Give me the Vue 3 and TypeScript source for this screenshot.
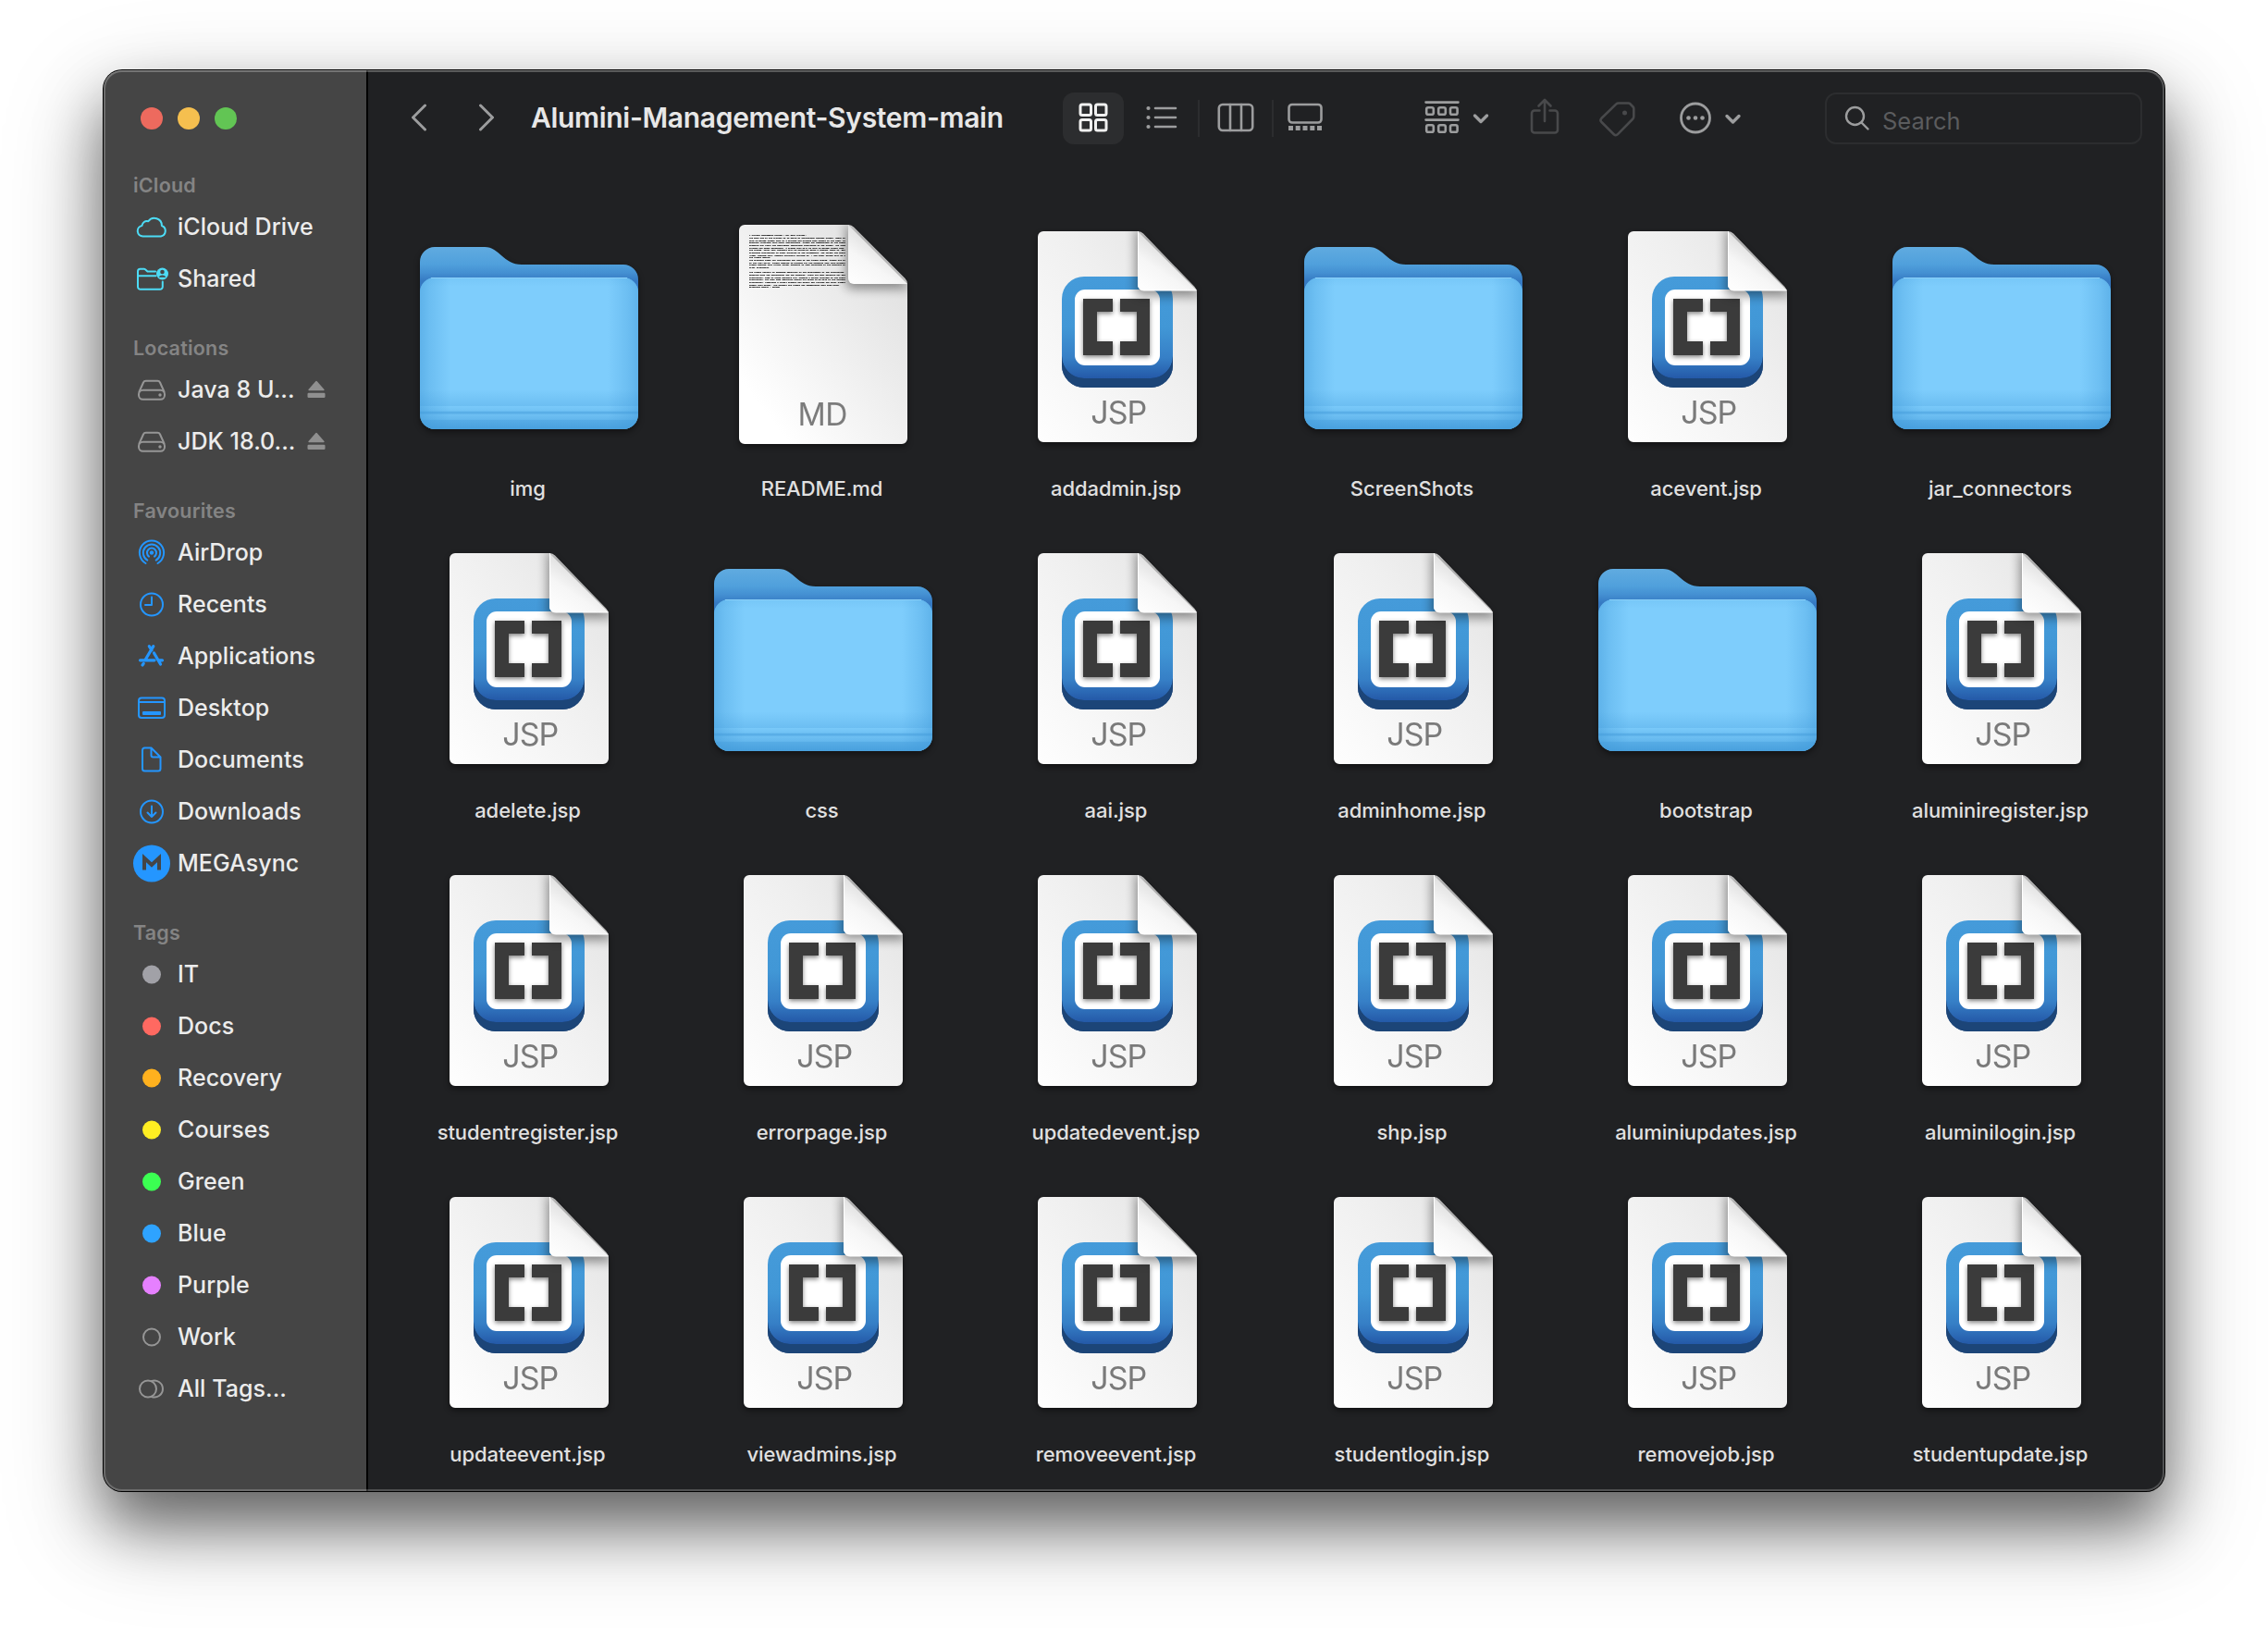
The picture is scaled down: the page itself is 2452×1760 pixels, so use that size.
<script setup lang="ts">
type IconName =
  | 'cloud' | 'shared' | 'disk' | 'airdrop' | 'clock' | 'apps' | 'desktop'
  | 'document' | 'download' | 'mega' | 'dot' | 'ring' | 'rings'

interface SidebarItem {
  label: string
  icon: IconName
  color: string
  eject?: boolean
}

interface SidebarSection {
  title: string
  items: SidebarItem[]
}

type FileKind = 'folder' | 'md' | 'jsp'

interface FileEntry {
  name: string
  kind: FileKind
}

const CYAN = '#4ddcf6'
const BLUE = '#2496ff'
const GREY = '#969696'

const sections: SidebarSection[] = [
  {
    title: 'iCloud',
    items: [
      { label: 'iCloud Drive', icon: 'cloud', color: CYAN },
      { label: 'Shared', icon: 'shared', color: CYAN },
    ],
  },
  {
    title: 'Locations',
    items: [
      { label: 'Java 8 U...', icon: 'disk', color: GREY, eject: true },
      { label: 'JDK 18.0...', icon: 'disk', color: GREY, eject: true },
    ],
  },
  {
    title: 'Favourites',
    items: [
      { label: 'AirDrop', icon: 'airdrop', color: BLUE },
      { label: 'Recents', icon: 'clock', color: BLUE },
      { label: 'Applications', icon: 'apps', color: BLUE },
      { label: 'Desktop', icon: 'desktop', color: BLUE },
      { label: 'Documents', icon: 'document', color: BLUE },
      { label: 'Downloads', icon: 'download', color: BLUE },
      { label: 'MEGAsync', icon: 'mega', color: BLUE },
    ],
  },
  {
    title: 'Tags',
    items: [
      { label: 'IT', icon: 'dot', color: '#a1a1a7' },
      { label: 'Docs', icon: 'dot', color: '#ff6961' },
      { label: 'Recovery', icon: 'dot', color: '#ffb11e' },
      { label: 'Courses', icon: 'dot', color: '#ffee22' },
      { label: 'Green', icon: 'dot', color: '#3bff52' },
      { label: 'Blue', icon: 'dot', color: '#2ea3ff' },
      { label: 'Purple', icon: 'dot', color: '#e680ff' },
      { label: 'Work', icon: 'ring', color: GREY },
      { label: 'All Tags...', icon: 'rings', color: GREY },
    ],
  },
]

const names: string[] = [
  'img', 'README.md', 'addadmin.jsp', 'ScreenShots', 'acevent.jsp', 'jar_connectors',
  'adelete.jsp', 'css', 'aai.jsp', 'adminhome.jsp', 'bootstrap', 'aluminiregister.jsp',
  'studentregister.jsp', 'errorpage.jsp', 'updatedevent.jsp', 'shp.jsp', 'aluminiupdates.jsp', 'aluminilogin.jsp',
  'updateevent.jsp', 'viewadmins.jsp', 'removeevent.jsp', 'studentlogin.jsp', 'removejob.jsp', 'studentupdate.jsp',
]

const kindOf = (name: string): FileKind =>
  name.endsWith('.jsp') ? 'jsp' : name.endsWith('.md') ? 'md' : 'folder'

const files: FileEntry[] = names.map((name) => ({ name, kind: kindOf(name) }))

const readme: string[] = [
  '# Project Management System - HCL Mini Project:',
  'The main aim of the project is to build an interaction between alumni, admin an',
  'able to manage alumni data of a college and provide easy access to the same, fo',
  'maintain relations with their institutions. Alumni can communicate to the stude',
  'students can learn the department technology activities to the alumni. The alum',
  'through the admin permission. A system that will be able to manage alumni data ',
  'the system. Final year students will be initially given a student login ID. Bef',
  'providing invitations to their profiles to the placements. The format has inclu',
  '(name, passing year, company currently working in, ) and their status will be i',
  'the alumni module.',
  'The greatest asset any institution can have is the Alumni system. Alumni are th',
  'in the real world. Alumni website is created for the students that have graduat',
  'alumni website that allows former students to take advantage of the benefits an',
  'after graduation.',
  '',
  'The alumni network is becoming important in the development of the institution ',
  'benefits both the institution and the students. There are many benefits for bei',
  'institution. Some of those benefits are: keeping a person informed on the event',
  'institution, and when some important events are going to be held in the institu',
  'information, receiving a formal student can easily get related and other alumni',
  'submit data easier. The student and alumni can communicate with each other.',
  'Milestone Manual - README',
]
</script>

<template>
  <div class="page">
    <svg class="defs" width="0" height="0" aria-hidden="true">
      <defs>
        <linearGradient id="sheet" x1="1" y1="0" x2="0" y2="1">
          <stop offset="0" stop-color="#e2e2e2" />
          <stop offset=".4" stop-color="#efefef" />
          <stop offset="1" stop-color="#fefefe" />
        </linearGradient>
        <linearGradient id="sheetMd" x1="1" y1="0" x2="0" y2="1">
          <stop offset="0" stop-color="#dcdcdc" />
          <stop offset=".4" stop-color="#ececec" />
          <stop offset=".85" stop-color="#ffffff" />
        </linearGradient>
        <linearGradient id="fold" x1="0.2" y1="1" x2=".62" y2=".38">
          <stop offset="0" stop-color="#fdfdfd" />
          <stop offset=".5" stop-color="#f6f6f6" />
          <stop offset="1" stop-color="#dfdfdf" />
        </linearGradient>
        <linearGradient id="blueFace" x1="0" y1="0" x2="0" y2="1">
          <stop offset="0" stop-color="#459bda" />
          <stop offset=".5" stop-color="#4197d6" />
          <stop offset=".8" stop-color="#367fc6" />
          <stop offset="1" stop-color="#2459a8" />
        </linearGradient>
        <linearGradient id="folderBack" gradientUnits="userSpaceOnUse" x1="0" y1="31" x2="0" y2="68">
          <stop offset="0" stop-color="#60abe0" />
          <stop offset=".5" stop-color="#50a0dc" />
          <stop offset=".75" stop-color="#4490d2" />
          <stop offset="1" stop-color="#3579c2" />
        </linearGradient>
        <linearGradient id="folderSides" x1="0" y1="0" x2="1" y2="0">
          <stop offset="0" stop-color="#3f98d8" stop-opacity=".5" />
          <stop offset=".05" stop-color="#3f98d8" stop-opacity=".27" />
          <stop offset=".14" stop-color="#3f98d8" stop-opacity="0" />
          <stop offset=".86" stop-color="#3f98d8" stop-opacity="0" />
          <stop offset=".95" stop-color="#3f98d8" stop-opacity=".27" />
          <stop offset="1" stop-color="#3f98d8" stop-opacity=".5" />
        </linearGradient>
        <linearGradient id="folderBottom" x1="0" y1="0" x2="0" y2="1">
          <stop offset="0" stop-color="#3f98d8" stop-opacity=".12" />
          <stop offset=".06" stop-color="#3f98d8" stop-opacity="0" />
          <stop offset=".74" stop-color="#3f98d8" stop-opacity="0" />
          <stop offset=".845" stop-color="#3f98d8" stop-opacity=".28" />
          <stop offset=".85" stop-color="#3f98d8" stop-opacity=".08" />
          <stop offset=".88" stop-color="#3f98d8" stop-opacity=".22" />
          <stop offset=".885" stop-color="#3f98d8" stop-opacity=".6" />
          <stop offset=".898" stop-color="#3f98d8" stop-opacity=".55" />
          <stop offset=".902" stop-color="#3f98d8" stop-opacity=".25" />
          <stop offset=".935" stop-color="#3f98d8" stop-opacity=".4" />
          <stop offset=".94" stop-color="#3f98d8" stop-opacity=".62" />
          <stop offset="1" stop-color="#3f98d8" stop-opacity=".85" />
        </linearGradient>
        <clipPath id="sheetClip">
          <path d="M48 14H150a8 8 0 0 1 6 2.500L211.500 74a9 9 0 0 1 2.500 6V236a6 6 0 0 1-6 6H48a6 6 0 0 1-6-6V20a6 6 0 0 1 6-6Z" />
        </clipPath>
        <clipPath id="sheetMdClip">
          <path d="M43 7H155a8 8 0 0 1 6 2.500L216.500 65a9 9 0 0 1 2.500 6V238a6 6 0 0 1-6 6H43a6 6 0 0 1-6-6V13a6 6 0 0 1 6-6Z" />
        </clipPath>
        <filter id="soft" x="-40%" y="-40%" width="180%" height="180%">
          <feGaussianBlur stdDeviation="6" />
        </filter>
        <filter id="softer" x="-20%" y="-20%" width="140%" height="140%">
          <feGaussianBlur stdDeviation="2.500" />
        </filter>
      </defs>

      <symbol id="file-folder" viewBox="0 0 256 256">
        <path
          d="M26 31H80C96 31 100 50 120 50H230a16 16 0 0 1 16 16V200H10V47a16 16 0 0 1 16-16Z"
          fill="url(#folderBack)"
        />
        <rect x="10" y="64" width="236" height="164" rx="16" fill="#7ecdfc" />
        <rect x="10" y="64" width="236" height="164" rx="16" fill="url(#folderSides)" />
        <rect x="10" y="64" width="236" height="164" rx="16" fill="url(#folderBottom)" />
        <path d="M22 64.500H234" stroke="#8ad0f8" stroke-width="1" />
      </symbol>

      <symbol id="file-md" viewBox="0 0 256 256">
        <g clip-path="url(#sheetMdClip)">
          <rect x="37" y="7" width="182" height="237" fill="url(#sheetMd)" />
        </g>
      </symbol>

      <symbol id="fold-md" viewBox="0 0 256 256">
        <g clip-path="url(#sheetMdClip)">
          <path d="M153 5V64a8 8 0 0 0 8 12H224L153 3Z" fill="#000" opacity=".42" filter="url(#soft)" />
          <path d="M155 7V65a6 6 0 0 0 6 6H219L155 7Z" fill="url(#fold)" />
        </g>
      </symbol>

      <symbol id="file-jsp" viewBox="0 0 256 256">
        <g clip-path="url(#sheetClip)">
          <rect x="42" y="14" width="172" height="228" fill="url(#sheet)" />
          <rect x="68" y="73" width="120" height="110" rx="24" fill="#1c4578" />
          <rect x="68" y="63" width="120" height="110" rx="24" fill="url(#blueFace)" />
          <path d="M68 150V159a24 24 0 0 0 24 24H164a24 24 0 0 0 24-24V149a24 24 0 0 1-24 24H92a24 24 0 0 1-24-24Z" fill="#1c4578" />
          <rect x="82" y="77" width="92" height="82" rx="11" fill="#fff" />
          <path
            d="M91 89h32v14h-17v32h17v15H91ZM131 89h32v61h-32v-15h18v-32h-18Z"
            fill="#000"
            opacity=".5"
            filter="url(#softer)"
          />
          <path d="M91 87h32v14h-17v32h17v15H91ZM131 87h32v61h-32v-15h18v-32h-18Z" fill="#3b3b3b" />
          <path d="M148 10V72a8 8 0 0 0 8 12H222L148 8Z" fill="#000" opacity=".42" filter="url(#soft)" />
          <path d="M150 14V72a6 6 0 0 0 6 6H214L150 14Z" fill="url(#fold)" />
          <path d="M150.500 14V72a6 6 0 0 0 6 6H214" fill="none" stroke="#fff" stroke-width="1" />
        </g>
      </symbol>
    </svg>

    <main class="window">
      <aside class="sidebar">
        <div class="lights">
          <span class="light red"></span>
          <span class="light yellow"></span>
          <span class="light green"></span>
        </div>
        <section v-for="s in sections" :key="s.title" class="group">
          <h2>{{ s.title }}</h2>
          <ul>
            <li v-for="item in s.items" :key="item.label">
              <span class="glyph" :style="{ color: item.color }">
                <svg v-if="item.icon === 'cloud'" width="40" height="40" viewBox="0 0 40 40">
                  <path d="M10.500 30.500a5.800 5.800 0 0 1-1-11.500a5.300 5.300 0 0 1 6.800-4.700a8 8 0 0 1 14.600 4.700a6 6 0 0 1-1 11.500Z" />
                </svg>
                <svg v-else-if="item.icon === 'shared'" width="40" height="40" viewBox="0 0 40 40">
                  <path d="M24 12.500H15.500L13 10.200a2 2 0 0 0-1.200-.4H7.500a2.500 2.500 0 0 0-2.500 2.500V29a2.800 2.800 0 0 0 2.800 2.800H29a2.800 2.800 0 0 0 2.800-2.800V23.500M5 17.300H24.500" />
                  <circle cx="31.500" cy="15" r="6.500" class="solid" />
                  <circle cx="31.500" cy="13" r="2.300" class="hole" />
                  <path d="M27.500 18.800a4.600 4.600 0 0 1 8 0Z" class="hole" />
                </svg>
                <svg v-else-if="item.icon === 'disk'" width="40" height="40" viewBox="0 0 40 40">
                  <path d="M6.500 22.500L11 12.500a3 3 0 0 1 2.800-1.800H26.200A3 3 0 0 1 29 12.500L33.500 22.500" />
                  <rect x="6" y="20.800" width="28" height="10" rx="4.500" />
                  <circle cx="29" cy="26" r="1.700" class="solid" />
                </svg>
                <svg v-else-if="item.icon === 'airdrop'" width="40" height="40" viewBox="0 0 40 40">
                  <circle cx="20" cy="20.500" r="2.200" class="solid" />
                  <path d="M17 24.600a5 5 0 1 1 6 0M15.300 28.600a9.200 9.200 0 1 1 9.400 0M13.500 32a13.100 13.100 0 1 1 13 0" />
                </svg>
                <svg v-else-if="item.icon === 'clock'" width="40" height="40" viewBox="0 0 40 40">
                  <circle cx="20" cy="20.500" r="12" />
                  <path d="M20 12.500V21H13" />
                </svg>
                <svg v-else-if="item.icon === 'apps'" width="40" height="40" viewBox="0 0 40 40">
                  <path d="M21.800 9.600L13 24.500M17.300 9.600L20 13.800M22.500 17L29.500 29M7.500 24.800H23M28 24.800H31.500M11.200 28.400L10 30" stroke-width="3.200" />
                </svg>
                <svg v-else-if="item.icon === 'desktop'" width="40" height="40" viewBox="0 0 40 40">
                  <rect x="6" y="9.500" width="28" height="21.500" rx="3" />
                  <path d="M6 14H34" />
                  <rect x="10" y="24" width="20" height="4" rx="1" class="solid" />
                </svg>
                <svg v-else-if="item.icon === 'document'" width="40" height="40" viewBox="0 0 40 40">
                  <path d="M12.500 7.500H19.500L29.500 17.500V30a2.600 2.600 0 0 1-2.600 2.600H12.500A2.600 2.600 0 0 1 10 30V10a2.600 2.600 0 0 1 2.500-2.500ZM19.500 8V15.500a2 2 0 0 0 2 2H29" />
                </svg>
                <svg v-else-if="item.icon === 'download'" width="40" height="40" viewBox="0 0 40 40">
                  <circle cx="20" cy="20.500" r="12" />
                  <path d="M20 14.500V26M15.500 21.500L20 26L24.500 21.500" />
                </svg>
                <svg v-else-if="item.icon === 'mega'" width="40" height="40" viewBox="0 0 40 40">
                  <circle cx="20" cy="20.500" r="20" class="solid" />
                  <path d="M12 27.500V14.500L20 22L28 14.500V27.500" class="mark" />
                </svg>
                <svg v-else-if="item.icon === 'dot'" width="40" height="40" viewBox="0 0 40 40">
                  <circle cx="20" cy="20.500" r="10" class="solid" />
                </svg>
                <svg v-else-if="item.icon === 'ring'" width="40" height="40" viewBox="0 0 40 40">
                  <circle cx="20" cy="20.500" r="9" />
                </svg>
                <svg v-else width="40" height="40" viewBox="0 0 40 40">
                  <circle cx="16" cy="20.500" r="9" />
                  <path d="M19.500 12.200a9 9 0 1 1 0 16.600" />
                </svg>
              </span>
              <span class="label">{{ item.label }}</span>
              <svg v-if="item.eject" class="eject" width="20" height="20" viewBox="0 0 20 20">
                <path d="M9.200 1.200a1.200 1.200 0 0 1 1.600 0L18.500 10a.8.8 0 0 1-.6 1.300H2.100A.8.8 0 0 1 1.500 10Z" />
                <rect x="0.500" y="13.700" width="19" height="5.300" rx="1.200" />
              </svg>
            </li>
          </ul>
        </section>
      </aside>

      <section class="content">
        <header class="toolbar">
          <svg class="nav" width="90" height="32" viewBox="0 0 90 32">
            <path d="M15.500 3L2.500 16L15.500 29M75.500 3L88.500 16L75.500 29" />
          </svg>
          <h1>Alumini-Management-System-main</h1>
          <div class="views">
            <span class="view active">
              <svg width="32" height="32" viewBox="0 0 32 32">
                <rect x="2" y="2" width="11.500" height="11.500" rx="2" />
                <rect x="18.500" y="2" width="11.500" height="11.500" rx="2" />
                <rect x="2" y="18.500" width="11.500" height="11.500" rx="2" />
                <rect x="18.500" y="18.500" width="11.500" height="11.500" rx="2" />
              </svg>
            </span>
            <span class="view list">
              <svg width="34" height="32" viewBox="0 0 34 32">
                <path d="M10 6H32M10 16H32M10 26H32" />
                <circle cx="2.500" cy="6" r="2.100" class="solid" />
                <circle cx="2.500" cy="16" r="2.100" class="solid" />
                <circle cx="2.500" cy="26" r="2.100" class="solid" />
              </svg>
            </span>
            <i class="rule"></i>
            <span class="view columns">
              <svg width="40" height="32" viewBox="0 0 40 32">
                <rect x="1.800" y="2" width="36.400" height="28" rx="4" />
                <path d="M14 2V30M26 2V30" />
              </svg>
            </span>
            <i class="rule"></i>
            <span class="view gallery">
              <svg width="38" height="32" viewBox="0 0 38 32">
                <rect x="1.500" y="2" width="35" height="19.500" rx="3.500" />
                <path d="M1 25h5v5H1zM8.700 25h5v5h-5zM16.500 25h5v5h-5zM24.300 25h5v5h-5zM32 25h5v5h-5z" class="solid" />
              </svg>
            </span>
          </div>
          <svg class="tool group-by" width="70" height="38" viewBox="0 0 70 38">
            <path d="M1.500 2.600H36.500M1.500 21.600H36.500" stroke-width="2.600" />
            <rect x="2.200" y="8.200" width="7.600" height="7.600" rx="1.800" />
            <rect x="15.200" y="8.200" width="7.600" height="7.600" rx="1.800" />
            <rect x="28" y="8.200" width="7.600" height="7.600" rx="1.800" />
            <rect x="2.200" y="27.200" width="7.600" height="7.600" rx="1.800" />
            <rect x="15.200" y="27.200" width="7.600" height="7.600" rx="1.800" />
            <rect x="28" y="27.200" width="7.600" height="7.600" rx="1.800" />
            <path d="M54.500 17L61 23.500L67.500 17" stroke-width="3.400" />
          </svg>
          <svg class="tool dim share" width="32" height="40" viewBox="0 0 32 40">
            <path d="M10.500 13.500H5a3 3 0 0 0-3 3V34.500a3 3 0 0 0 3 3H27a3 3 0 0 0 3-3V16.500a3 3 0 0 0-3-3H21.500M16 25V2.500M9.500 8.500L16 2L22.500 8.500" />
          </svg>
          <svg class="tool dim tag" width="40" height="40" viewBox="0 0 40 40">
            <path d="M21 3.500H31.500a3 3 0 0 1 2 .8L36.500 7.500a3 3 0 0 1 .8 2V18a4 4 0 0 1-1.200 2.800L20 37.200a3 3 0 0 1-4.200 0L2.500 24a3 3 0 0 1 0-4.200L18.200 4.600A4 4 0 0 1 21 3.500Z" />
            <circle cx="27.500" cy="14" r="2.500" class="solid" />
          </svg>
          <svg class="tool more" width="68" height="36" viewBox="0 0 68 36">
            <circle cx="18" cy="17.500" r="15.500" stroke-width="2.800" />
            <circle cx="10.500" cy="17.500" r="2.300" class="solid" />
            <circle cx="18" cy="17.500" r="2.300" class="solid" />
            <circle cx="25.500" cy="17.500" r="2.300" class="solid" />
            <path d="M52 15.500L58.500 22L65 15.500" stroke-width="3.400" />
          </svg>
          <div class="search">
            <svg width="28" height="28" viewBox="0 0 28 28">
              <circle cx="11.500" cy="11.500" r="9.500" />
              <path d="M18.500 18.500L25.500 25.500" />
            </svg>
            <span>Search</span>
          </div>
        </header>

        <div class="files">
          <figure v-for="f in files" :key="f.name" class="file">
            <svg class="art" width="256" height="256" viewBox="0 0 256 256">
              <use :href="'#file-' + f.kind" width="256" height="256" />
              <template v-if="f.kind === 'md'">
                <g class="tiny">
                  <text v-for="(line, i) in readme" :key="i" x="48" :y="19.2 + i * 2.67">{{ line }}</text>
                </g>
                <use href="#fold-md" width="256" height="256" />
                <text x="127.300" y="224" class="ext md">MD</text>
              </template>
              <text v-else-if="f.kind === 'jsp'" x="129.300" y="222" class="ext jsp">JSP</text>
            </svg>
            <figcaption>{{ f.name }}</figcaption>
          </figure>
        </div>
      </section>
    </main>
  </div>
</template>

<style>
body {
  background: #fff;
  overflow: hidden;
}
</style>

<style scoped>
.page {
  width: 2452px;
  height: 1760px;
  box-sizing: border-box;
  padding: 76px 112px 148px;
  background: #fff;
  overflow: hidden;
  font-family: Inter, "Liberation Sans", sans-serif;
}

.defs {
  position: absolute;
}

.window {
  position: relative;
  display: flex;
  width: 2228px;
  height: 1536px;
  border-radius: 20px;
  background: #202123;
  box-shadow:
    0 0 0 1px #000,
    0 36px 64px rgba(0, 0, 0, 0.5),
    0 36px 110px rgba(0, 0, 0, 0.25);
}

.window::after {
  content: "";
  position: absolute;
  inset: 0;
  border-radius: 20px;
  box-shadow:
    inset 0 1px 0 rgba(255, 255, 255, 0.2),
    inset 0 0 0 2px rgba(255, 255, 255, 0.21);
}

.sidebar {
  width: 284px;
  flex: none;
  border-right: 2px solid #000;
  border-radius: 20px 0 0 20px;
  background: #454545;
}

.lights {
  display: flex;
  gap: 16px;
  padding: 40px 0 0 40px;
  height: 67px;
}

.light {
  width: 24px;
  height: 24px;
  border-radius: 50%;
}

.red {
  background: #ed6a5e;
}

.yellow {
  background: #f5bf4f;
}

.green {
  background: #62c554;
}

.group {
  margin-bottom: 30px;
}

.group h2 {
  margin: 0;
  padding-left: 32px;
  height: 34px;
  line-height: 34px;
  font-size: 21.5px;
  font-weight: 600;
  letter-spacing: 0.2px;
  color: #848484;
}

.group ul {
  margin: 0;
  padding: 0;
  list-style: none;
}

.group li {
  display: flex;
  align-items: center;
  height: 56px;
  padding-left: 32px;
}

.glyph {
  display: flex;
  width: 40px;
  height: 40px;
}

.glyph svg {
  fill: none;
  stroke: currentColor;
  stroke-width: 2;
  stroke-linecap: round;
  stroke-linejoin: round;
  overflow: visible;
}

.glyph .solid {
  fill: currentColor;
  stroke: none;
}

.glyph .hole {
  fill: #454545;
  stroke: none;
}

.glyph .mark {
  stroke: #454545;
  stroke-width: 4;
  stroke-linecap: butt;
  stroke-linejoin: miter;
}

.label {
  margin-left: 8px;
  width: 132px;
  line-height: 56px;
  font-size: 25px;
  font-weight: 500;
  letter-spacing: 0.05px;
  color: #ececec;
  white-space: nowrap;
}

.eject {
  margin-left: 8px;
  fill: #8f8f8f;
}

.content {
  flex: 1;
  min-width: 0;
  overflow: hidden;
  border-radius: 0 20px 20px 0;
}

.toolbar {
  display: flex;
  align-items: center;
  height: 104px;
  padding-left: 46px;
}

.toolbar svg {
  flex: none;
  fill: none;
  stroke: #9c9d9e;
  stroke-width: 3;
  stroke-linecap: round;
  stroke-linejoin: round;
}

.toolbar svg .solid {
  fill: #9c9d9e;
  stroke: none;
}

.nav {
  margin-top: -3px;
}

.toolbar h1 {
  margin: -2px 0 0 40px;
  width: 575px;
  font-size: 30px;
  line-height: 40px;
  font-weight: 600;
  letter-spacing: -0.32px;
  color: #e7e7e7;
  white-space: nowrap;
}

.views {
  display: flex;
  align-items: center;
}

.view {
  display: flex;
  align-items: center;
  justify-content: center;
  height: 56px;
  padding-bottom: 2px;
  box-sizing: border-box;
}

.view.active {
  width: 66px;
  border-radius: 12px;
  background: #2c2d2f;
}

.toolbar .active svg {
  stroke: #f0f0f0;
}

.view.list {
  padding-left: 24px;
  padding-right: 22px;
}

.toolbar .list svg,
.toolbar .columns svg,
.toolbar .gallery svg {
  stroke-width: 2.6;
}

.rule {
  width: 2px;
  height: 40px;
  background: #2c2d2f;
}

.view.columns {
  width: 78px;
}

.view.gallery {
  padding-left: 15px;
}

.toolbar .tool {
  stroke-width: 2.6;
}

.toolbar .group-by {
  margin-left: 110px;
  margin-top: -2px;
}

.toolbar .dim {
  stroke: #48494b;
}

.toolbar .dim .solid {
  fill: #48494b;
}

.toolbar .share {
  margin-left: 44px;
  margin-top: -4px;
}

.toolbar .tag {
  margin-left: 43px;
}

.toolbar .more {
  margin-left: 46px;
  margin-top: -1px;
}

.search {
  display: flex;
  align-items: center;
  width: 343px;
  height: 56px;
  box-sizing: border-box;
  margin-left: 90px;
  padding-left: 19px;
  border: 2px solid #2c2d2f;
  border-radius: 12px;
}

.toolbar .search svg {
  stroke-width: 2.4;
}

.search span {
  margin: 5px 0 0 13px;
  font-size: 25.5px;
  line-height: 34px;
  color: #5b5c5e;
}

.files {
  display: grid;
  grid-template-columns: 318px 318px 318px 320px 318px 318px;
  grid-auto-rows: 348px;
  padding: 56px 0 0 13px;
}

.file {
  display: flex;
  flex-direction: column;
  align-items: center;
  margin: 0;
}

.file:nth-child(6n + 4) {
  padding-left: 2px;
}

.art {
  flex: none;
  margin-left: 4px;
  overflow: visible;
  filter: drop-shadow(0 3px 3px rgba(0, 0, 0, 0.45));
}

.file figcaption {
  margin: 20px 0 0 1px;
  font-size: 22px;
  line-height: 32px;
  font-weight: 500;
  letter-spacing: -0.06px;
  color: #e0e0e0;
  white-space: nowrap;
}

.ext {
  font-family: Inter, "Liberation Sans", sans-serif;
  text-anchor: middle;
}

.ext.md {
  font-size: 33.5px;
  font-weight: 400;
  letter-spacing: -0.4px;
  fill: #7c7c7c;
}

.ext.jsp {
  font-size: 34px;
  font-weight: 400;
  letter-spacing: -1px;
  fill: #7a7a7a;
}

.tiny text {
  font-family: "Liberation Mono", monospace;
  font-size: 2.2px;
  font-weight: 700;
  fill: #000;
  stroke: #000;
  stroke-width: 0.12px;
}
</style>
